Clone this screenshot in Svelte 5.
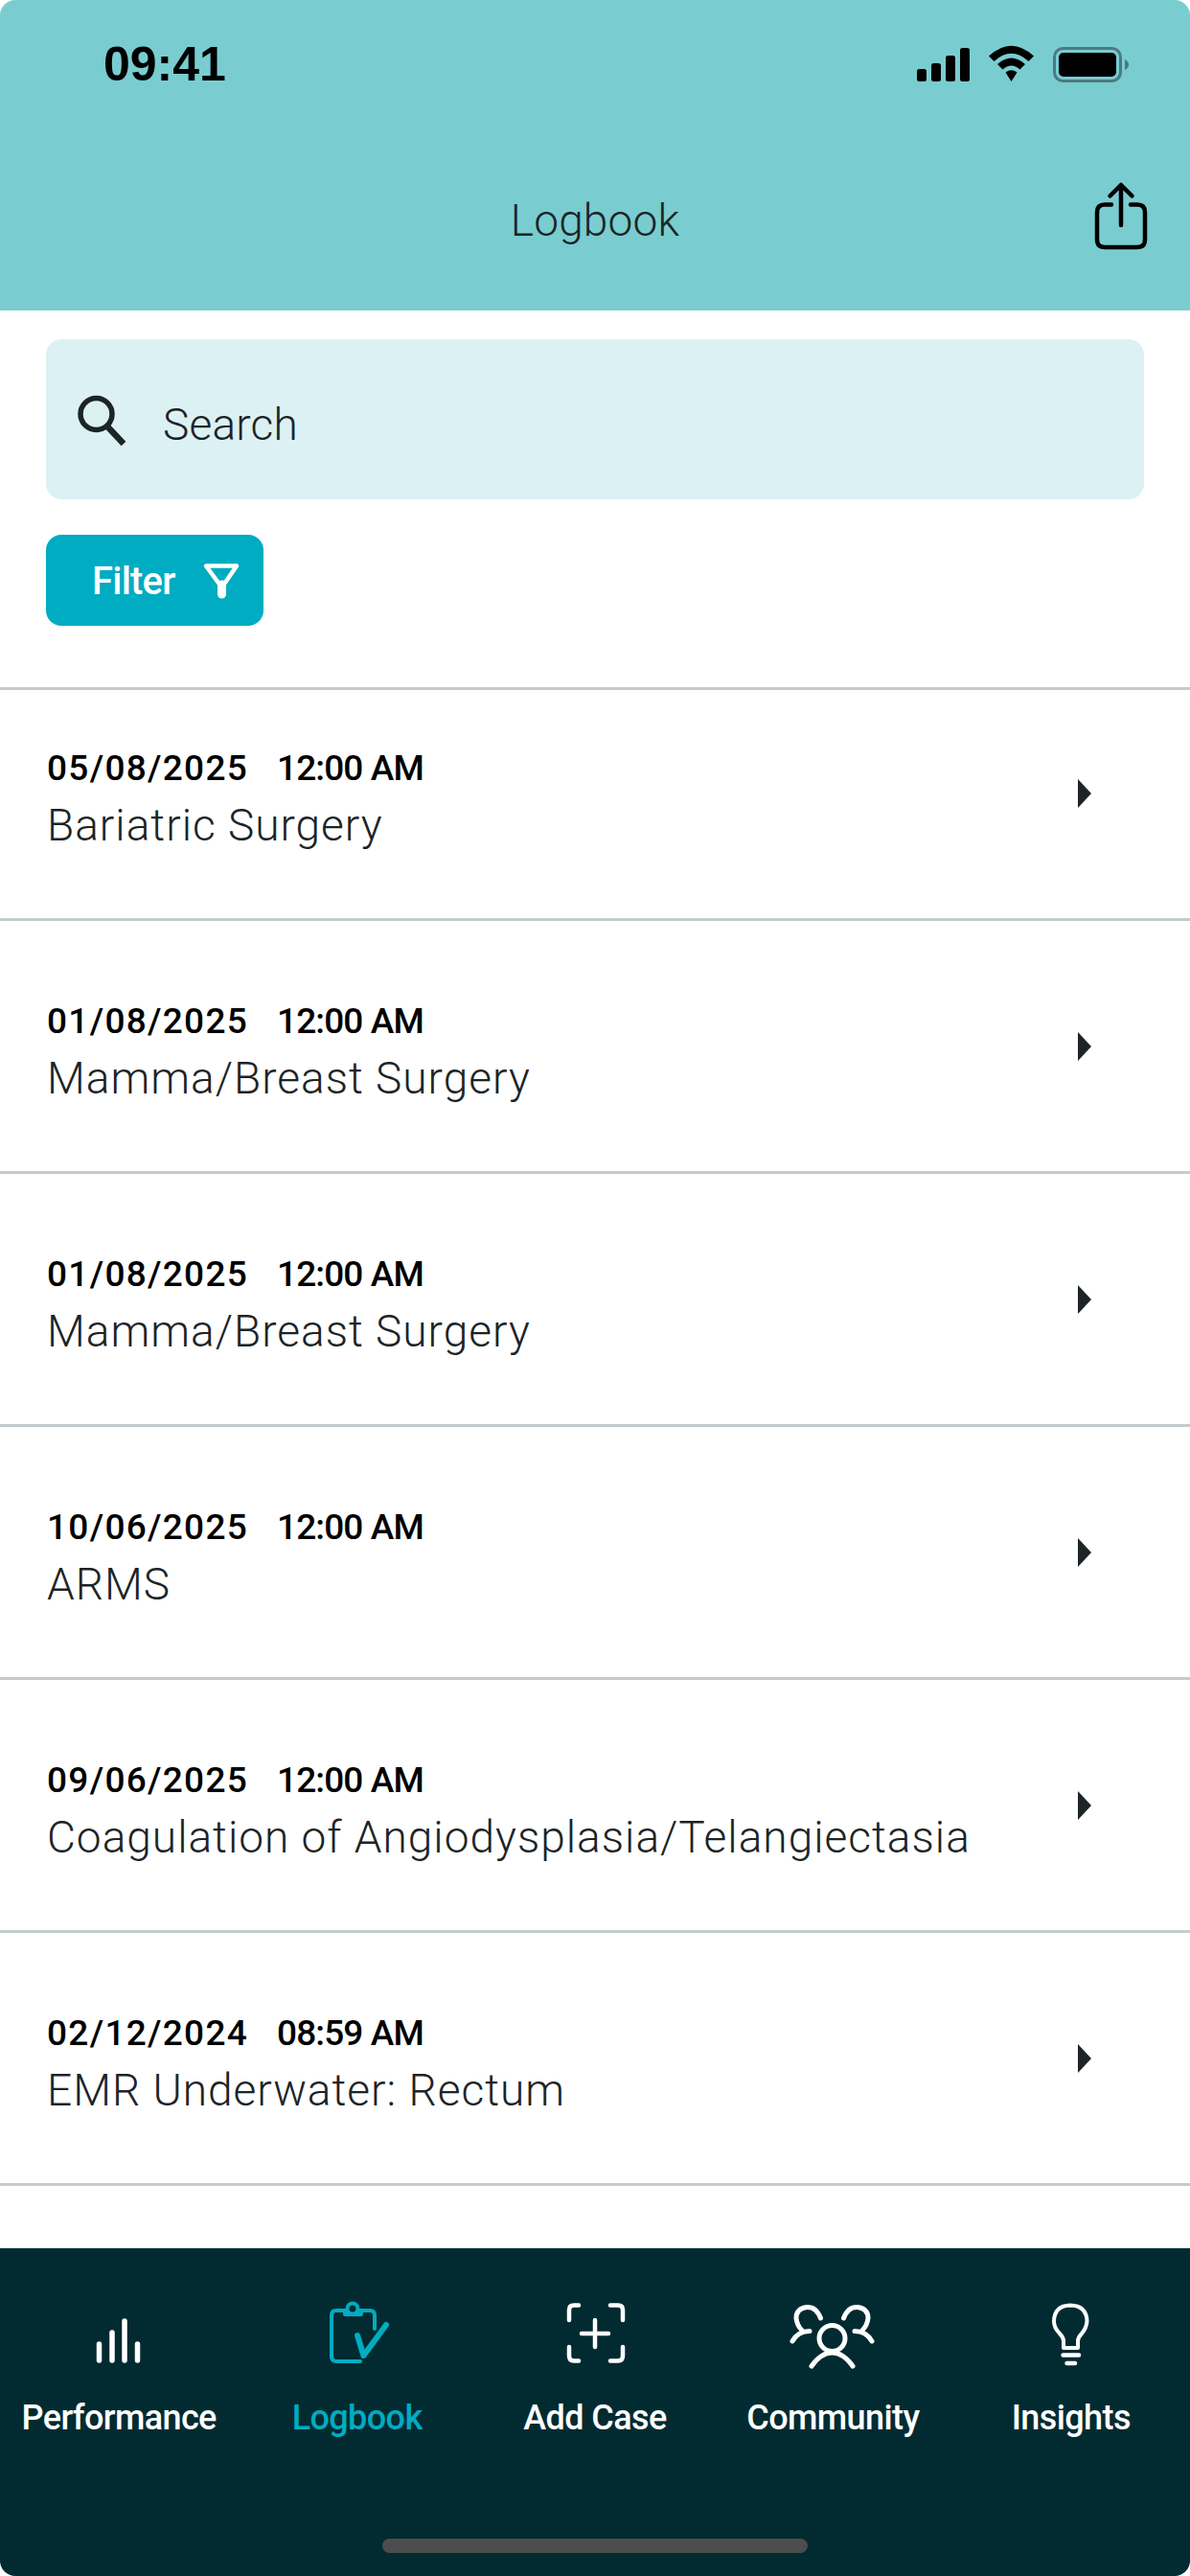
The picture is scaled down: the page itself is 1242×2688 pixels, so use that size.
<script lang="ts">
  const cases = [
    { date: "05/08/2025", time: "12:00 AM", name: "Bariatric Surgery" },
    { date: "01/08/2025", time: "12:00 AM", name: "Mamma/Breast Surgery" },
    { date: "01/08/2025", time: "12:00 AM", name: "Mamma/Breast Surgery" },
    { date: "10/06/2025", time: "12:00 AM", name: "ARMS" },
    { date: "09/06/2025", time: "12:00 AM", name: "Coagulation of Angiodysplasia/Telangiectasia" },
    { date: "02/12/2024", time: "08:59 AM", name: "EMR Underwater: Rectum" },
  ];
</script>

<div class="screen">
  <header class="top">
    <div class="status">
      <span class="clock">09:41</span>
      <svg class="status-icons" viewBox="950 44 232 46" width="232" height="46">
        <rect x="957" y="72" width="10" height="13" rx="2.5" />
        <rect x="972" y="66" width="10" height="19" rx="2.5" />
        <rect x="987" y="58" width="10" height="27" rx="2.5" />
        <rect x="1002" y="50" width="10" height="35" rx="2.5" />
        <path d="M1032 58.5 Q1055.500 37 1079 58.500 L1073.500 64 Q1055.500 47.500 1037.500 64Z" />
        <path d="M1041 67 Q1055.500 54 1070 67 L1064.500 72.500 Q1055.500 64.500 1046.500 72.500Z" />
        <path d="M1049.500 75.500 Q1055.500 71 1061.500 75.500 L1055.500 85Z" />
        <rect x="1100.500" y="50.500" width="69" height="34" rx="9" fill="none" stroke="#4a7a80" stroke-width="3" />
        <rect x="1105" y="55" width="60" height="25" rx="5" />
        <path d="M1174 62 Q1178 64 1178 67.500 Q1178 71 1174 73Z" fill="#4a7a80" />
      </svg>
    </div>
    <div class="titlebar">
      <h1>Logbook</h1>
      <svg class="share" viewBox="1138 188 64 76" width="64" height="76" fill="none" stroke="#000" stroke-width="4.500" stroke-linecap="round" stroke-linejoin="round">
        <path d="M1160 213.500 H1153 Q1145 213.500 1145 221.500 V250 Q1145 258 1153 258 H1187 Q1195 258 1195 250 V221.500 Q1195 213.500 1187 213.500 H1180" />
        <path d="M1170 235 V193 M1158.500 204.500 L1170 193 L1181.500 204.500" />
      </svg>
    </div>
  </header>

  <section class="controls">
    <div class="search">
      <svg viewBox="76 406 60 60" width="60" height="60" fill="none" stroke="#1c2426" stroke-width="5.500">
        <circle cx="100.500" cy="430" r="16.500" />
        <path d="M112 443 L129 461" stroke-width="6.500" />
      </svg>
      <span>Search</span>
    </div>
    <button class="filter">
      <span>Filter</span>
      <svg viewBox="208 584 44 44" width="44" height="44" fill="none" stroke="#fff" stroke-width="4.500" stroke-linejoin="round">
        <path d="M214 590.500 H246 L230.500 613Z" />
        <path d="M230.500 610 V620" stroke-width="9" stroke-linecap="round" />
      </svg>
    </button>
  </section>

  <ul class="list">
    {#each cases as item}
      <li class="row">
        <div class="row-text">
          <div class="stamp"><span class="date">{item.date}</span><span class="time">{item.time}</span></div>
          <div class="name">{item.name}</div>
        </div>
        <svg class="chevron" viewBox="0 0 14 30" width="14" height="30"><path d="M0 0 L14 15 L0 30Z" /></svg>
      </li>
    {/each}
  </ul>

  <nav class="tabs">
    <div class="tab-row">
      <div class="tab">
        <svg viewBox="79 2400 90 72" width="90" height="72" fill="none" stroke="currentColor" stroke-width="5.500" stroke-linecap="round">
          <path d="M103.500 2446 V2463 M117 2434 V2463 M130 2422 V2463 M143.500 2446 V2463" />
        </svg>
        <span>Performance</span>
      </div>
      <div class="tab active">
        <svg viewBox="328 2400 90 72" width="90" height="72" fill="none" stroke="currentColor" stroke-width="4" stroke-linecap="round" stroke-linejoin="round">
          <path d="M360 2411 H351 Q346 2411 346 2416 V2459 Q346 2464 351 2464 H376" />
          <path d="M376 2411 H386 Q391 2411 391 2416 V2430" />
          <path d="M360 2415 H377 M360 2415 V2411 M377 2415 V2411" />
          <circle cx="368" cy="2409" r="5.500" />
          <path d="M373 2437 L379.500 2458 L403 2426" stroke-width="6" />
        </svg>
        <span>Logbook</span>
      </div>
      <div class="tab">
        <svg viewBox="576 2400 90 72" width="90" height="72" fill="none" stroke="currentColor" stroke-width="4.500" stroke-linecap="round">
          <path d="M604 2405.500 H599 Q594 2405.500 594 2410.500 V2421 M594 2449 V2458 Q594 2463.500 599 2463.500 H604" />
          <path d="M637 2405.500 H645 Q650 2405.500 650 2410.500 V2421 M650 2449 V2458 Q650 2463.500 645 2463.500 H637" />
          <path d="M607 2435 H635 M621 2421 V2449" />
        </svg>
        <span>Add Case</span>
      </div>
      <div class="tab">
        <svg viewBox="824 2400 90 72" width="90" height="72" fill="none" stroke="currentColor" stroke-width="5" stroke-linecap="round">
          <circle cx="868.500" cy="2440" r="13.500" />
          <path d="M847 2469 Q857 2455 868.500 2455 Q880 2455 890 2469" />
          <path d="M856.500 2419 Q852 2407 842 2407.500 Q831 2409 831 2419 Q832 2427 837 2431.500 M845 2432.500 Q833 2432.500 827 2443" />
          <path d="M880.500 2419 Q885 2407 895 2407.500 Q906 2409 906 2419 Q905 2427 900 2431.500 M892 2432.500 Q904 2432.500 910 2443" />
        </svg>
        <span>Community</span>
      </div>
      <div class="tab">
        <svg viewBox="1073 2400 90 72" width="90" height="72" fill="none" stroke="currentColor" stroke-width="4" stroke-linecap="round" stroke-linejoin="round">
          <path d="M1110 2450 V2443 Q1110 2439 1106 2435 Q1100 2429 1100 2422 Q1100.500 2406 1117 2405.500 Q1134 2406 1134.500 2422 Q1134 2429 1129 2435 Q1125 2439 1125 2443 V2450 Z" />
          <path d="M1109.500 2457.500 H1126 M1113.500 2466 H1122" stroke-width="4.500" />
        </svg>
        <span>Insights</span>
      </div>
    </div>
    <div class="home"></div>
  </nav>
</div>

<style>
  :global(body) {
    margin: 0;
    background: #fff;
  }
  .screen {
    width: 1242px;
    height: 2688px;
    display: flex;
    flex-direction: column;
    overflow: hidden;
    border-radius: 16px;
    background: #fff;
    font-family: Roboto, "Noto Sans", sans-serif;
    color: #1c2426;
  }
  .top {
    height: 324px;
    flex: 0 0 auto;
    background: #79cdd1;
  }
  .status {
    height: 134px;
    padding: 39px 60px 0 108px;
    box-sizing: border-box;
    display: flex;
    justify-content: space-between;
    align-items: flex-start;
  }
  .clock {
    font-family: "Liberation Sans", sans-serif;
    font-weight: 700;
    font-size: 50px;
    line-height: 56px;
    color: #000;
  }
  .status-icons {
    margin-top: 5px;
  }
  .titlebar {
    position: relative;
    display: flex;
    justify-content: center;
  }
  h1 {
    margin: 68px 0 0;
    font-size: 46px;
    line-height: 56px;
    font-weight: 300;
    letter-spacing: 0.200px;
  }
  .share {
    position: absolute;
    right: 40px;
    top: 54px;
  }
  .controls {
    padding: 30px 48px 0;
    height: 396px;
    box-sizing: border-box;
    flex: 0 0 auto;
    border-bottom: 3px solid #c2cccf;
  }
  .search {
    height: 167px;
    border-radius: 16px;
    background: #dcf1f4;
    display: flex;
    align-items: center;
    padding-left: 28px;
    gap: 34px;
    font-size: 46px;
    font-weight: 300;
    letter-spacing: 0.200px;
  }
  .search span {
    margin-top: 10px;
  }
  .filter {
    margin-top: 37px;
    width: 227px;
    height: 95px;
    border: 0;
    border-radius: 16px;
    background: #00acc1;
    color: #fff;
    display: flex;
    align-items: center;
    padding: 2px 0 0 48px;
    gap: 26px;
    font-family: inherit;
    font-size: 40px;
    font-weight: 500;
    letter-spacing: -0.800px;
  }
  .filter svg {
    margin-top: -2px;
  }
  .list {
    list-style: none;
    margin: 0;
    padding: 0;
    flex: 1 1 auto;
    overflow: hidden;
  }
  .row {
    height: 264px;
    box-sizing: border-box;
    border-bottom: 3px solid #c2cccf;
    display: flex;
    align-items: center;
    justify-content: space-between;
    padding: 0 103px 0 49px;
  }
  .row:first-child {
    height: 241px;
    padding-bottom: 23px;
  }
  .row-text {
    padding-top: 12px;
  }
  .stamp {
    display: flex;
    gap: 30px;
    font-size: 37px;
    line-height: 44px;
    font-weight: 500;
    color: #000;
  }
  .date {
    letter-spacing: 1.300px;
  }
  .time {
    letter-spacing: -0.900px;
  }
  .name {
    margin-top: 11px;
    font-size: 46px;
    line-height: 52px;
    font-weight: 300;
    letter-spacing: 1px;
  }
  .chevron {
    fill: #1c2426;
  }
  .tabs {
    height: 342px;
    flex: 0 0 auto;
    background: #022b31;
    color: #fff;
    display: flex;
    flex-direction: column;
  }
  .tab-row {
    display: grid;
    grid-template-columns: repeat(5, 1fr);
    padding-top: 54px;
  }
  .tab {
    display: flex;
    flex-direction: column;
    align-items: center;
    gap: 29px;
    font-size: 36px;
    line-height: 44px;
    font-weight: 500;
    letter-spacing: -0.600px;
  }
  .tab svg {
    display: block;
  }
  .active {
    color: #00acc1;
  }
  .home {
    width: 444px;
    height: 15px;
    margin: auto auto 24px;
    border-radius: 8px;
    background: #4d4d4d;
  }
</style>
